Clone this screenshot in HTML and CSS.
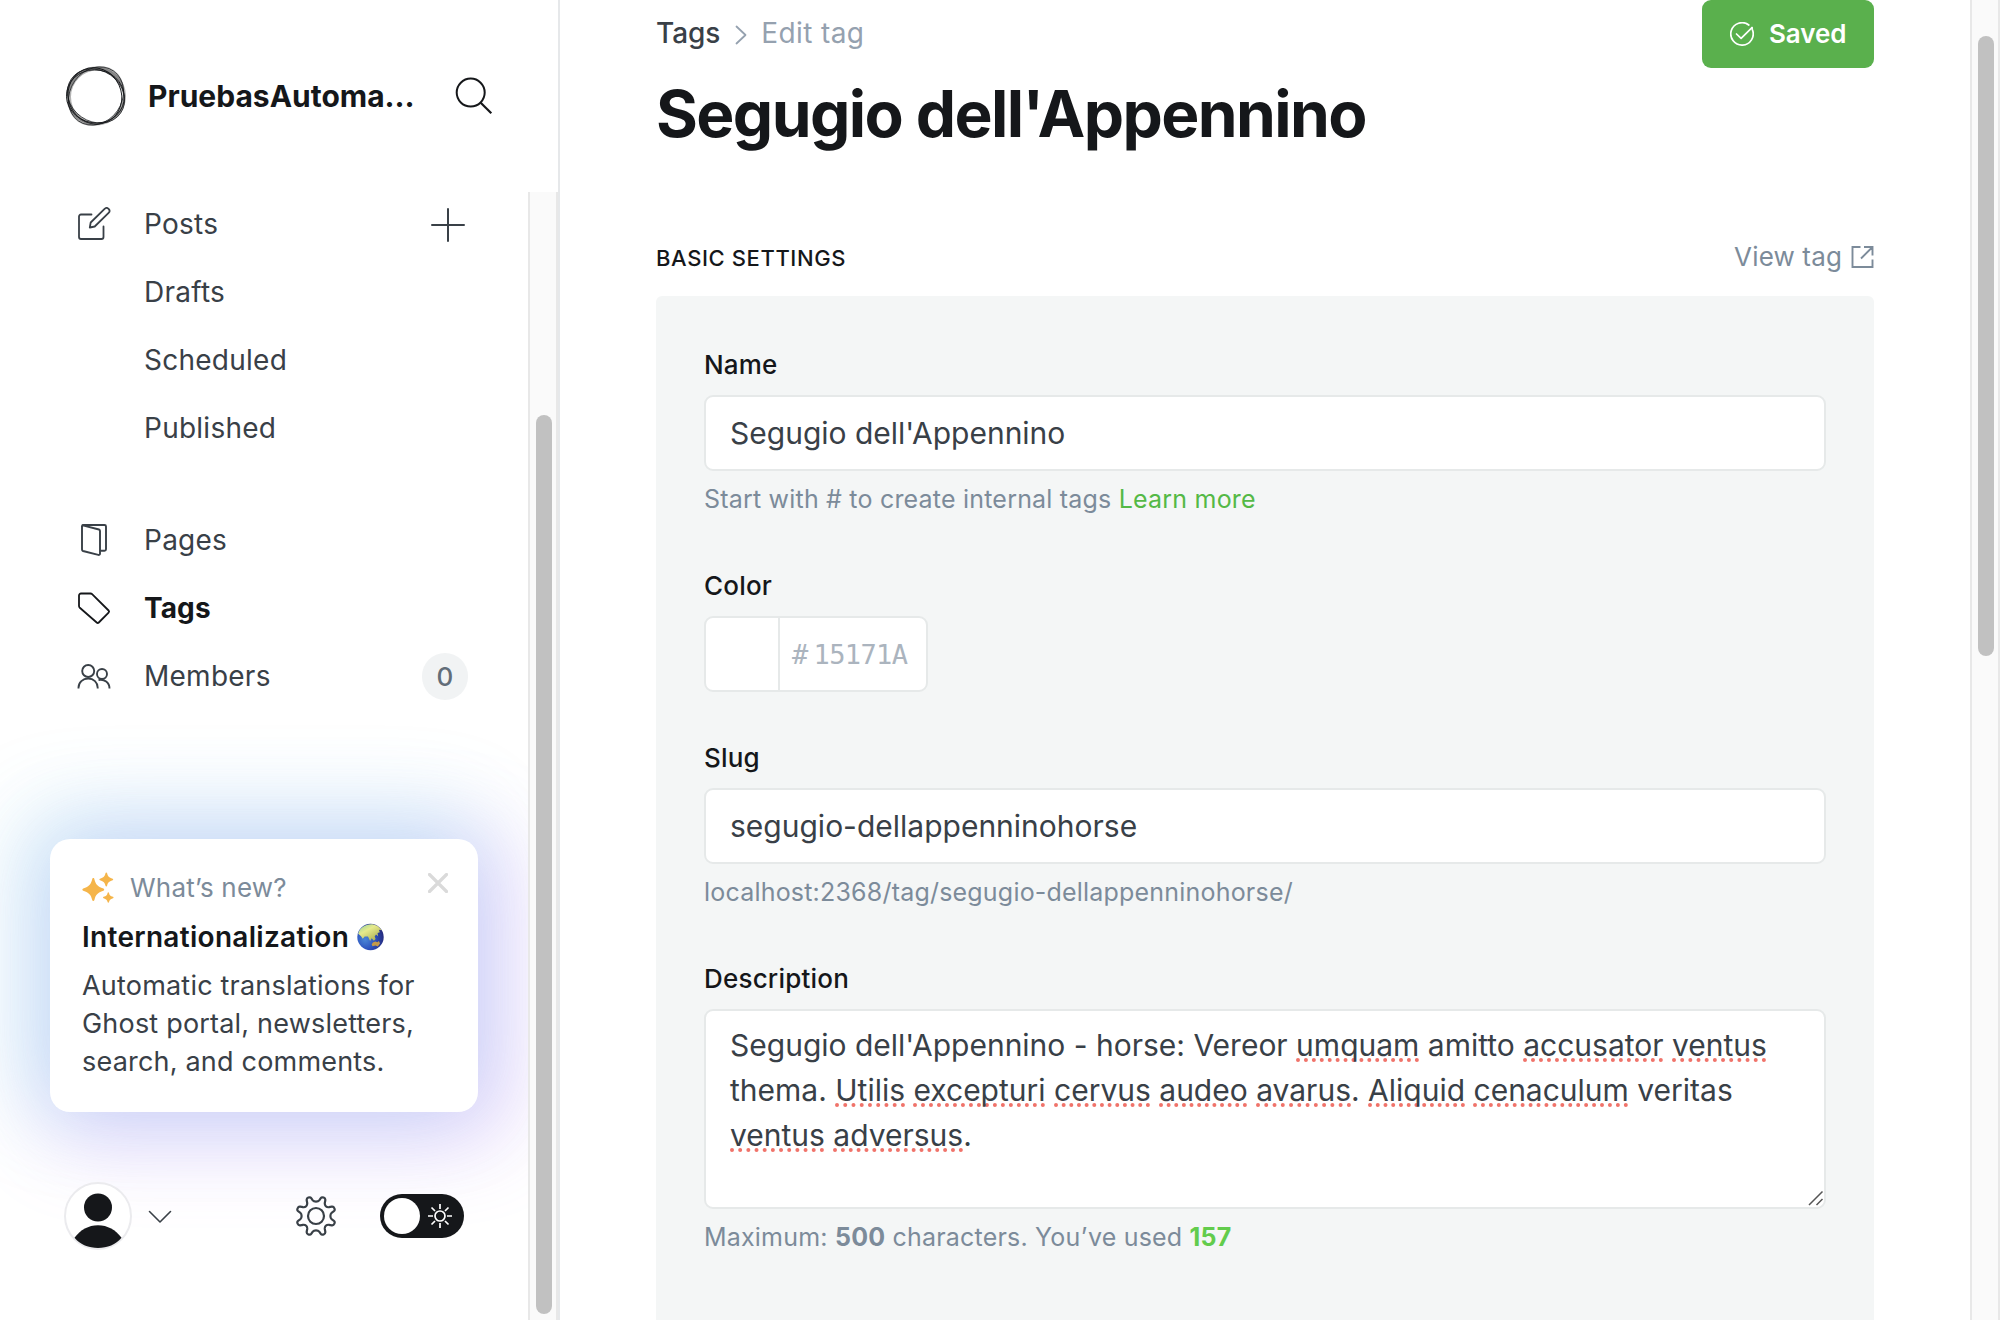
FILE: index.html
```html
<!DOCTYPE html>
<html lang="en">
<head>
<meta charset="utf-8">
<title>Edit tag</title>
<link rel="stylesheet" href="styles.css">
</head>
<body>
<div class="app">
  <aside class="sidebar">
    <header class="site">
      <svg class="site-logo" viewBox="0 0 62 62" fill="none">
        <path fill="#222" fill-opacity=".3" fill-rule="evenodd" d="M49 5.300A31 26 -55 1 1 13 56.700A31 26 -55 1 1 49 5.300zM55.600 48.200A30 25.500 35 1 1 6.400 13.800A30 25.500 35 1 1 55.600 48.200z"/>
        <path fill="#222" fill-opacity=".35" fill-rule="evenodd" d="M1 31a30 29.500 0 1 1 60 0a30 29.500 0 1 1-60 0zM6 32a26 26.500 0 1 0 52 0a26 26.500 0 1 0-52 0z"/>
        <g stroke="#16181b" stroke-width=".9">
          <ellipse cx="31" cy="31" rx="30.500" ry="26" transform="rotate(-55 31 31)" stroke-width=".7"/>
          <ellipse cx="31" cy="31" rx="30" ry="25.500" transform="rotate(35 31 31)" stroke-width=".7"/>
          <ellipse cx="30.500" cy="31.500" rx="29" ry="26.500" transform="rotate(10 31 31)"/>
          <ellipse cx="30.500" cy="32" rx="28.500" ry="26.500" transform="rotate(65 31 31)"/>
        </g>
      </svg>
      <div class="site-name">PruebasAutoma…</div>
      <svg class="search" viewBox="0 0 38 38" fill="none" stroke="#15171a" stroke-width="2"><circle cx="15.700" cy="15.600" r="14"/><path d="M25.700 25.700 36.300 36.300" stroke-width="2.200"/></svg>
    </header>
    <div class="nav-scroll">
      <nav class="nav">
        <a class="row">
          <svg class="icon" viewBox="0 0 34 34" fill="none" stroke="#394047" stroke-width="1.800" stroke-linecap="round" stroke-linejoin="round"><path d="M14.500 7.500H4a2 2 0 0 0-2 2V30a2 2 0 0 0 2 2h20.500a2 2 0 0 0 2-2V19.500"/><path d="M12.800 20.500l.9-5L27.600 1.900a2.600 2.600 0 0 1 4 4L17.700 19.500l-4.900 1z"/></svg>
          <span class="label">Posts</span>
          <svg class="plus" viewBox="0 0 34 34" stroke="#394047" stroke-width="2" stroke-linecap="round"><path d="M17 1v32M1 17h32"/></svg>
        </a>
        <a class="row sub"><span class="label">Drafts</span></a>
        <a class="row sub"><span class="label">Scheduled</span></a>
        <a class="row sub"><span class="label">Published</span></a>
        <a class="row group">
          <svg class="icon" viewBox="0 0 34 34" fill="none" stroke="#394047" stroke-width="1.900" stroke-linecap="round" stroke-linejoin="round"><path d="M5 3.500A1.500 1.500 0 0 1 6.500 2h21A1.500 1.500 0 0 1 29 3.500v22.800a1.500 1.500 0 0 1-1.500 1.500H24"/><path d="M5.800 2.300 22 6.500a1.600 1.600 0 0 1 1 1.500v22.700a1.300 1.300 0 0 1-1.700 1.200L6 28a1.500 1.500 0 0 1-1-1.400V3.500"/></svg>
          <span class="label">Pages</span>
        </a>
        <a class="row current">
          <svg class="icon" viewBox="0 0 34 34" fill="none" stroke="#15171a" stroke-width="1.800" stroke-linejoin="round"><path d="M2 4.500a2 2 0 0 1 2-2h9.500a2.500 2.500 0 0 1 1.600.7L31.600 19.500a1.500 1.500 0 0 1 0 2.100L21.800 31.500a1.500 1.500 0 0 1-2.100 0L2.800 16.800A2.500 2.500 0 0 1 2 15z"/></svg>
          <span class="label">Tags</span>
        </a>
        <a class="row">
          <svg class="icon" viewBox="0 0 34 34" fill="none" stroke="#394047" stroke-width="1.900"><circle cx="11.200" cy="12" r="6"/><path d="M1.500 29.500v-.8C1.500 23.500 5.800 19.500 11.200 19.500s9.500 4 9.500 9.200v.8"/><circle cx="25" cy="15" r="5"/><path d="M21.500 21.100c5.800-1.300 11 2.500 11 8.400"/></svg>
          <span class="label">Members</span>
          <span class="count">0</span>
        </a>
      </nav>
      <section class="news">
        <svg class="close" viewBox="0 0 20 20" stroke="#dadada" stroke-width="3.200" stroke-linecap="round"><path d="M1.500 1.500l17 17M18.500 1.500l-17 17"/></svg>
        <div class="news-head">
          <svg class="sparkle" viewBox="0 0 32 32" fill="#f5b54a"><path d="M11.300 6c.7 0 .9.500 1.100 1.200 1.300 5.200 3 7.200 9 9.200 1.100.4 1.100 1.900 0 2.300-6 2-7.700 4-9 9.200-.2.700-.5 1.100-1.100 1.100s-.9-.4-1.100-1.100c-1.300-5.200-3-7.200-9-9.200-1.100-.4-1.100-1.900 0-2.300 6-2 7.700-4 9-9.200.2-.7.500-1.200 1.100-1.200z"/><path d="M24.300.4c.5 0 .7.400.8.800.7 3 1.800 4.400 5.500 5.500.8.300.8 1.400 0 1.600-3.700 1.100-4.800 2.500-5.500 5.500-.1.400-.3.800-.8.800s-.7-.4-.8-.8c-.7-3-1.800-4.400-5.500-5.500-.8-.3-.8-1.400 0-1.600 3.700-1.100 4.800-2.500 5.500-5.500.1-.4.300-.8.800-.8z"/><path d="M26.300 20.200c.4 0 .6.300.7.700.5 2.200 1.300 3 4 3.900.7.200.7 1.200 0 1.400-2.700.9-3.500 1.700-4 3.900-.1.400-.3.700-.7.700s-.6-.3-.7-.7c-.5-2.200-1.300-3-4-3.900-.7-.2-.7-1.200 0-1.400 2.700-.9 3.500-1.700 4-3.900.1-.4.300-.7.700-.7z"/></svg>
          <span>What’s new?</span>
        </div>
        <div class="news-title">
          <span>Internationalization</span>
          <svg class="globe" viewBox="0 0 28 28">
            <defs>
              <radialGradient id="sea" cx=".3" cy=".6" r=".7"><stop offset="0" stop-color="#4a86d6"/><stop offset=".55" stop-color="#2c50bd"/><stop offset="1" stop-color="#262c80"/></radialGradient>
              <linearGradient id="land" x1="0" y1="0" x2=".8" y2="1"><stop offset="0" stop-color="#8fcf9a"/><stop offset=".4" stop-color="#e6ea8c"/><stop offset="1" stop-color="#a9ac50"/></linearGradient>
            </defs>
            <circle cx="14" cy="14" r="13.700" fill="url(#sea)"/>
            <path d="M1.200 10.500C3 4.500 8.500.9 14.500.9c4.600 0 8.600 2.400 10.800 6l-2.600-.4 1 2.600-2.400.8.600 3.300-2.200-1.800-1.400 2 1 2.600-1.800 1.900-2.300-2.700-1.600 3-2.200-4.600-3.400-.2-2 2.400-2-2.800z" fill="url(#land)"/>
            <path d="M15.200 21.800l1.200-2 2.600-1.200 2.200.8 1.500-1.200 1.200 2.600-2.300 3-2.500-.9-3 .8z" fill="#c49a4a"/>
          </svg>
        </div>
        <p class="news-body">Automatic translations for<br>Ghost portal, newsletters,<br>search, and comments.</p>
      </section>
      <footer class="user">
        <svg class="avatar" viewBox="0 0 68 68"><circle cx="34" cy="34" r="33" fill="#fff" stroke="#ebebee" stroke-width="2"/><circle cx="34" cy="25.500" r="14" fill="#15171a"/><path d="M10.500 55.800C16.300 48 24.500 43.300 34 43.300s17.700 4.700 23.500 12.500C51.700 62.600 43.500 66 34 66s-17.700-3.400-23.500-10.200z" fill="#15171a"/></svg>
        <svg class="caret" viewBox="0 0 24 14" fill="none" stroke="#394047" stroke-width="1.600" stroke-linecap="round" stroke-linejoin="round"><path d="M1.500 1.500 12 12 22.500 1.500"/></svg>
        <svg class="gear" viewBox="0 0 40 40" fill="none" stroke="#394047" stroke-width="2.200" stroke-linejoin="round"><circle cx="20" cy="20" r="8"/><path d="M16.800 4.400C18 6 22 6 23.200 4.400L24.800 2.100C26 .4 29.700 1.800 29.300 4.200L28.800 7C28.500 9.600 30.400 11.500 33 11.200L35.800 10.700C38.200 10.300 39.600 14 37.900 15.200L35.600 16.800C34 18 34 22 35.600 23.200L37.900 24.800C39.600 26 38.200 29.700 35.800 29.300L33 28.800C30.400 28.500 28.500 30.400 28.800 33L29.300 35.800C29.700 38.200 26 39.600 24.800 37.900L23.200 35.600C22 34 18 34 16.800 35.600L15.200 37.900C14 39.600 10.300 38.200 10.700 35.800L11.200 33C11.500 30.400 9.600 28.500 7 28.800L4.200 29.300C1.800 29.700.4 26 2.100 24.800L4.400 23.200C6 22 6 18 4.400 16.800L2.100 15.200C.4 14 1.800 10.300 4.200 10.700L7 11.200C9.600 11.500 11.500 9.600 11.200 7L10.700 4.200C10.300 1.800 14 .4 15.200 2.100Z"/></svg>
        <div class="toggle">
          <span class="knob"></span>
          <svg class="sun" viewBox="0 0 24 24" fill="none" stroke="#fff" stroke-width="1.700"><circle cx="12" cy="12" r="5"/><path d="M12 0v5M12 19v5M0 12h5M19 12h5M3.500 3.500l3.500 3.500M17 17l3.500 3.500M3.500 20.500 7 17M17 7l3.500-3.500"/></svg>
        </div>
      </footer>
    </div>
    <div class="track nav-track"><div class="thumb"></div></div>
  </aside>

  <main class="main">
    <header class="page-head">
      <div class="crumbs">
        <span class="crumb-root">Tags</span>
        <svg class="crumb-sep" viewBox="0 0 12 20" fill="none" stroke="#95a1af" stroke-width="1.800" stroke-linecap="round" stroke-linejoin="round"><path d="M1.500 1.500 10.500 10l-9 8.500"/></svg>
        <span>Edit tag</span>
      </div>
      <button class="save">
        <svg class="save-icon" viewBox="0 0 24 24" fill="none" stroke="#fff" stroke-width="1.700" stroke-linecap="round" stroke-linejoin="round"><path d="M18.800 3A11.200 11.200 0 1 0 22.300 7.500L22 5.600"/><path d="M6.500 12l4.600 4.400L22 5.600"/></svg>
        <span class="save-text">Saved</span>
      </button>
    </header>
    <h1 class="title">Segugio dell'Appennino</h1>
    <div class="section-head">
      <h4 class="section-title">BASIC SETTINGS</h4>
      <a class="view-link"><span>View tag</span>
        <svg class="ext" viewBox="0 0 22 22" fill="none" stroke="#7c8b9a" stroke-width="1.900"><path d="M9 1H1v20h20v-7.500M12.500 1H21v8.500M21 1 9.500 12.500"/></svg>
      </a>
    </div>
    <form class="panel">
      <div class="field">
        <label class="field-label">Name</label>
        <div class="input">Segugio dell'Appennino</div>
        <p class="help">Start with # to create internal tags <a class="learn">Learn more</a></p>
      </div>
      <div class="field color-field">
        <label class="field-label">Color</label>
        <div class="color"><span class="swatch"></span><span class="hex"><span class="hash">#</span>15171A</span></div>
      </div>
      <div class="field">
        <label class="field-label">Slug</label>
        <div class="input">segugio-dellappenninohorse</div>
        <p class="help">localhost:2368/tag/segugio-dellappenninohorse/</p>
      </div>
      <div class="field">
        <label class="field-label">Description</label>
        <div class="input area">Segugio dell'Appennino - horse: Vereor <u>umquam</u> amitto <u>accusator</u> <u>ventus</u><br>thema. <u>Utilis</u> <u>excepturi</u> <u>cervus</u> <u>audeo</u> <u>avarus</u>. <u>Aliquid</u> <u>cenaculum</u> veritas<br><u>ventus</u> <u>adversus</u>.
          <svg class="grip" viewBox="0 0 16 16" stroke="#555" stroke-width="1.500"><path d="M1 15 14.500 1.500M8.500 15 14.500 9"/></svg>
        </div>
        <p class="help">Maximum: <b>500</b> characters. You’ve used <b class="used">157</b></p>
      </div>
    </form>
  </main>
  <div class="track page-track"><div class="thumb"></div></div>
</div>
</body>
</html>
```
FILE: styles.css
```css
* { box-sizing: border-box; }
body {
  margin: 0;
  background: #fff;
  color: #15171a;
  font-family: Inter, "Liberation Sans", sans-serif;
  font-size: 28px;
}
h1, h4, p { margin: 0; }
svg { display: block; flex: none; }

.app {
  display: flex;
  width: 2000px;
  height: 1320px;
  overflow: hidden;
}

/* Sidebar */
.sidebar {
  display: grid;
  grid-template: 192px 1128px / 528px 30px;
  flex: none;
  width: 560px;
  border-right: 2px solid #e6e8ea;
}
.site {
  grid-column: 1 / 3;
  display: flex;
  align-items: center;
  height: 192px;
  padding-left: 65px;
}
.site-logo { width: 62px; height: 62px; }
.site-name {
  width: 272px;
  margin: 0 35px 0 21px;
  font-size: 30px;
  font-weight: 700;
  white-space: nowrap;
}
.search { width: 38px; height: 38px; }
.nav-scroll {
  display: flex;
  flex-direction: column;
  overflow: hidden;
}
.nav { flex: none; height: 647px; }
.row {
  display: flex;
  align-items: center;
  height: 68px;
  padding: 0 60px 0 77px;
  color: #394047;
  letter-spacing: .25px;
}
.nav .row:first-child { margin-top: -2px; }
.row.sub { padding-left: 144px; }
.row.group { margin-top: 44px; }
.icon { width: 34px; height: 34px; margin-right: 33px; }
.label { flex: 1; }
.current { color: #15171a; font-weight: 700; letter-spacing: .1px; }
.plus { width: 34px; height: 34px; margin: 2px 3px 0 0; }
.count {
  display: flex;
  align-items: center;
  justify-content: center;
  width: 46px;
  height: 47px;
  border-radius: 24px;
  background: #f1f3f4;
  color: #626d79;
  font-size: 26px;
  font-weight: 500;
}

/* What's new card */
.news {
  position: relative;
  flex: none;
  width: 428px;
  height: 273px;
  margin-left: 50px;
  padding: 29px 32px;
  border-radius: 20px;
  background: #fff;
  box-shadow:
    -14px -12px 84px 14px rgb(80 212 226 / 25%),
    14px 12px 84px 16px rgb(180 105 246 / 30%);
}
.close {
  position: absolute;
  top: 34px;
  right: 30px;
  width: 20px;
  height: 20px;
}
.news-head {
  display: flex;
  align-items: center;
  gap: 16px;
  height: 38px;
  color: #7c8b9a;
  font-size: 26px;
  letter-spacing: .2px;
}
.sparkle { width: 32px; height: 32px; margin-top: 2px; }
.news-title {
  display: flex;
  align-items: center;
  gap: 8px;
  height: 38px;
  margin-top: 12px;
  font-size: 28px;
  font-weight: 600;
  letter-spacing: .3px;
}
.globe { width: 27px; height: 28px; }
.news-body {
  margin-top: 11px;
  color: #394047;
  font-size: 27px;
  line-height: 38px;
  letter-spacing: .2px;
}

/* User bar */
.user {
  position: relative;
  display: flex;
  align-items: center;
  height: 68px;
  margin-top: 70px;
  padding-left: 64px;
}
.avatar { width: 68px; height: 68px; }
.caret { width: 24px; height: 14px; margin: 2px 0 0 16px; }
.gear { width: 40px; height: 40px; margin-left: 124px; }
.toggle {
  display: flex;
  align-items: center;
  gap: 8px;
  width: 84px;
  height: 44px;
  margin-left: 44px;
  padding-left: 4px;
  border-radius: 22px;
  background: #15171a;
}
.knob {
  width: 36px;
  height: 36px;
  border-radius: 50%;
  background: #fff;
}
.sun { width: 24px; height: 24px; }

/* Scrollbars */
.track {
  flex: none;
  width: 30px;
  padding-left: 6px;
  border: solid #e8e8e8;
  border-width: 0 2px;
  background: #fafafa;
}
.thumb {
  width: 16px;
  border-radius: 8px;
  background: #c1c1c1;
}
.nav-track { padding-top: 223px; }
.nav-track .thumb { height: 899px; }
.page-track { padding-top: 36px; }
.page-track .thumb { height: 620px; }

/* Main column */
.main {
  width: 1410px;
  padding: 0 96px;
}
.page-head {
  display: flex;
  justify-content: space-between;
  height: 68px;
}
.crumbs {
  display: flex;
  align-items: center;
  height: 66px;
  color: #95a1af;
  letter-spacing: .4px;
}
.crumb-root { color: #394047; font-weight: 500; letter-spacing: -.1px; }
.crumb-sep { width: 12px; height: 20px; margin: 4px 14px 0 15px; }
.save {
  display: flex;
  align-items: center;
  gap: 15px;
  width: 172px;
  height: 68px;
  padding: 0 0 0 28px;
  border: 0;
  border-radius: 9px;
  background: #5ab04d;
  color: #fff;
  font: 600 26px Inter, "Liberation Sans", sans-serif;
  letter-spacing: -.1px;
}
.save-icon { width: 24px; height: 24px; }
.save-text { padding-bottom: 2px; }
.title {
  height: 78px;
  margin-top: 7px;
  font-size: 64px;
  font-weight: 700;
  line-height: 78px;
  letter-spacing: -1.6px;
  white-space: nowrap;
}
.section-head {
  display: flex;
  justify-content: space-between;
  height: 143px;
  padding-top: 87px;
  line-height: 34px;
}
.section-title {
  padding-top: 1px;
  font-size: 22px;
  font-weight: 500;
  letter-spacing: .6px;
}
.view-link {
  display: flex;
  align-items: center;
  gap: 9px;
  height: 34px;
  color: #7c8b9a;
  font-size: 26px;
  letter-spacing: .15px;
}
.ext { width: 23px; height: 22px; }

/* Settings panel */
.panel {
  height: 1040px;
  padding: 49px 48px 0;
  border-radius: 6px;
  background: #f4f6f6;
}
.field { height: 221px; }
.color-field { height: 172px; }
.field-label {
  display: block;
  height: 50px;
  font-size: 26px;
  font-weight: 500;
  line-height: 40px;
  letter-spacing: .2px;
}
.input {
  height: 76px;
  padding: 0 24px;
  border: 2px solid #e6e9e9;
  border-radius: 9px;
  background: #fff;
  color: #394047;
  font-size: 30px;
  line-height: 72px;
  white-space: nowrap;
}
.area {
  position: relative;
  height: 200px;
  padding-top: 12px;
  line-height: 45px;
}
.area u {
  text-decoration: underline dotted #f0736a 4px;
  text-underline-offset: 2px;
  text-decoration-skip-ink: none;
}
.grip {
  position: absolute;
  right: 0;
  bottom: 1px;
  width: 16px;
  height: 16px;
}
.help {
  margin-top: 9px;
  color: #7c8b9a;
  font-size: 25px;
  line-height: 38px;
  letter-spacing: .2px;
  white-space: nowrap;
}
.learn { color: #54b946; }
.used { color: #62cc4c; }
.color {
  display: flex;
  width: 224px;
  height: 76px;
  border: 2px solid #e6e9e9;
  border-radius: 9px;
  background: #fff;
}
.swatch { width: 74px; border-right: 2px solid #e6e9e9; }
.hex {
  padding-left: 12px;
  color: #abb4be;
  font: 27px/74px "DejaVu Sans Mono", monospace;
  letter-spacing: -.65px;
}
.hash { margin-right: 6px; }
```
